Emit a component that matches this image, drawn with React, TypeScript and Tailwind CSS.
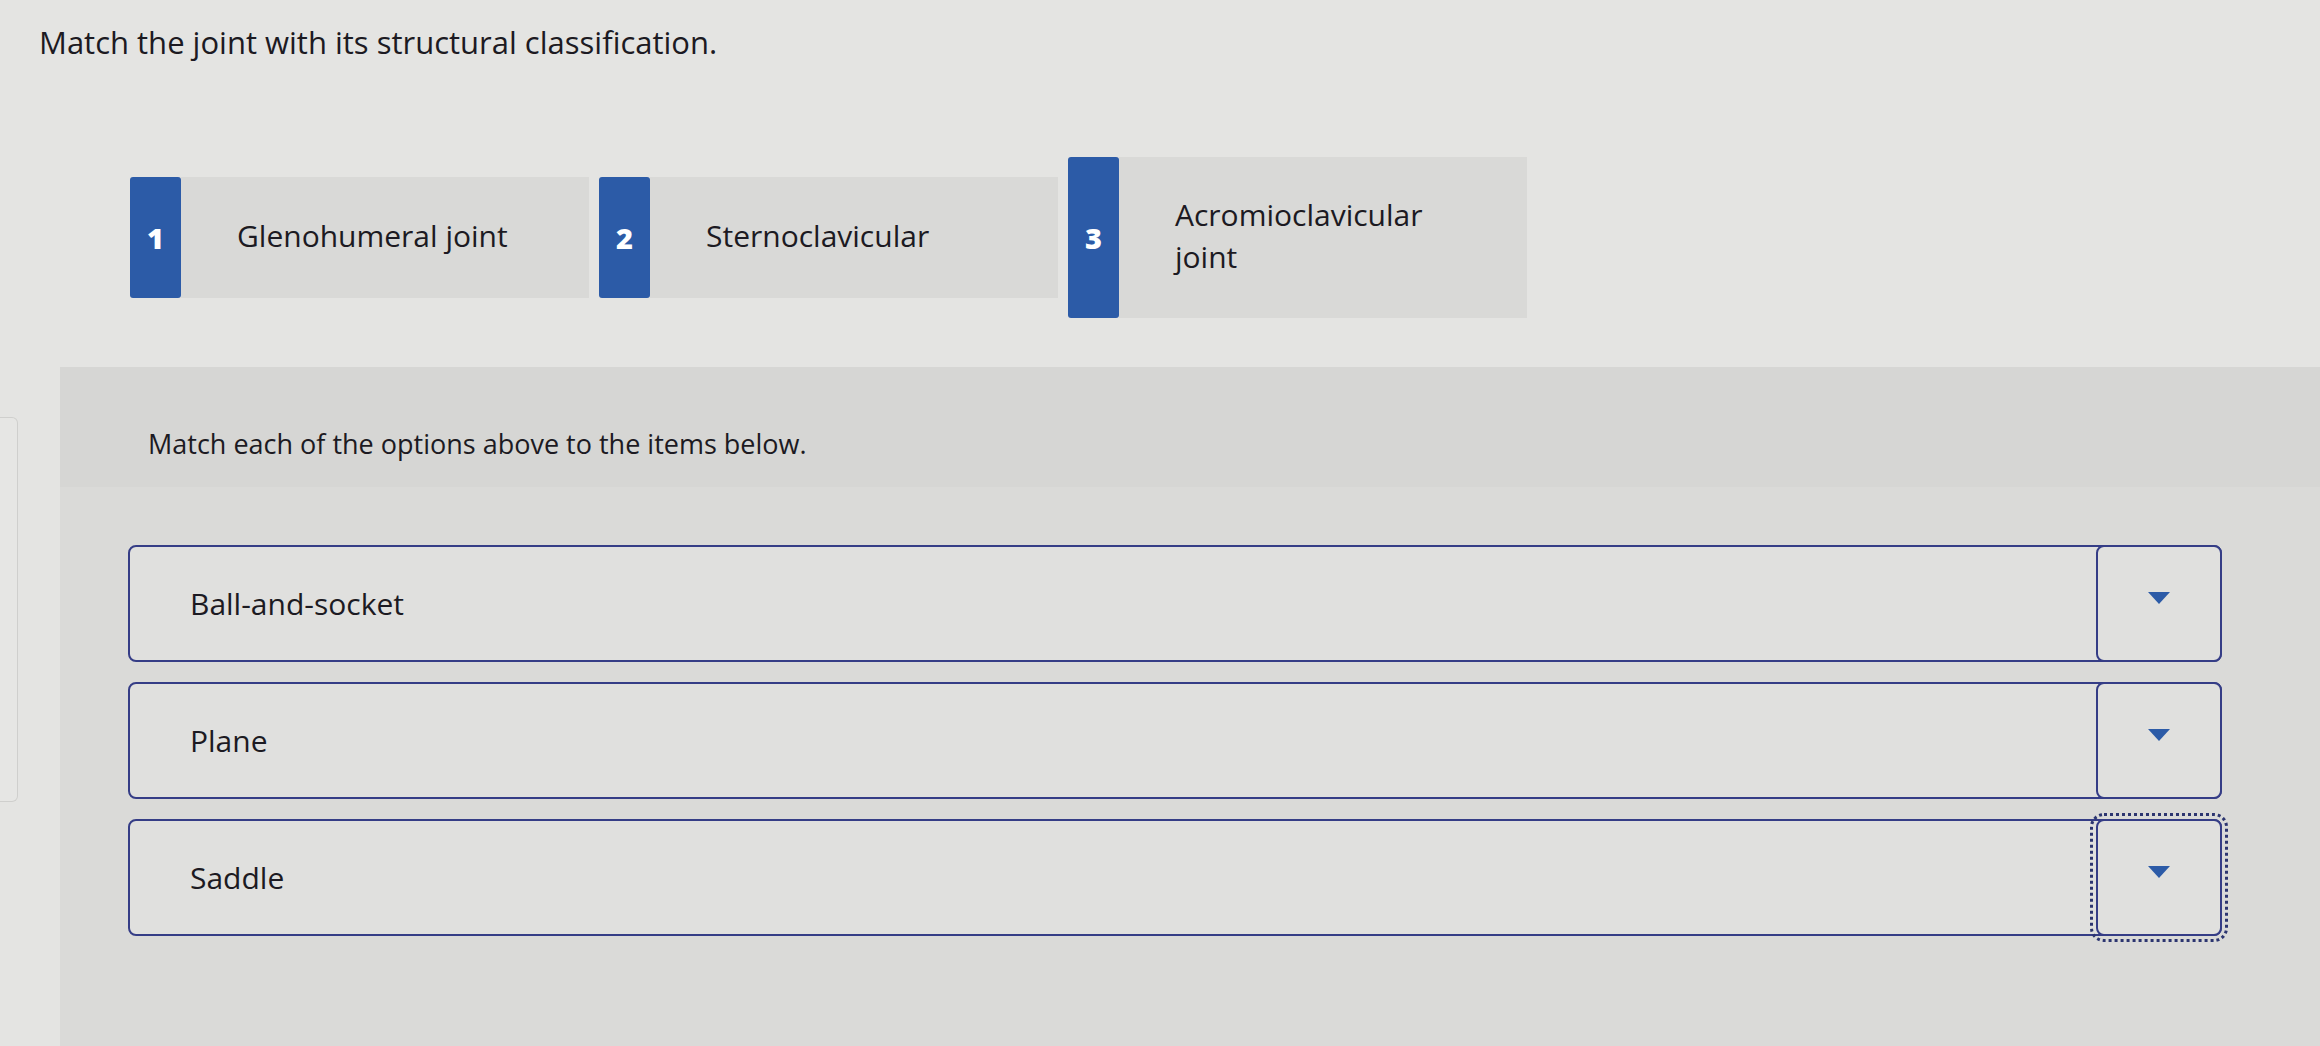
import React from 'react';

interface IOption {
  n: number;
  label: string;
}

const options: IOption[] = [
  { n: 1, label: 'Glenohumeral joint' },
  { n: 2, label: 'Sternoclavicular' },
  { n: 3, label: 'Acromioclavicular joint' },
];

const items = ['Ball-and-socket', 'Plane', 'Saddle'];

function OptionCard({ option }: { option: IOption }) {
  const tall = option.n === 3;
  return (
    <div className={`flex w-[459px] ${tall ? 'h-[161px]' : 'h-[121px]'}`}>
      <div className="flex w-[51px] shrink-0 items-center justify-center rounded-[3px] bg-[#2c5ba7] text-[29px] font-extrabold text-white">
        {option.n}
      </div>
      <div className="flex flex-1 items-center bg-[#d9d9d7] pb-[4px] pl-[56px] pr-[30px] text-[30px] leading-[42px] text-[#1c1a22]">
        <span className={tall ? 'w-[300px]' : ''}>{option.label}</span>
      </div>
    </div>
  );
}

function MatchRow({ label, focused }: { label: string; focused: boolean }) {
  return (
    <div className="flex h-[117px] rounded-lg border-2 border-[#353d86] bg-[#e0e0de]">
      <div className="flex flex-1 items-center pl-[60px] text-[30px] text-[#1c1a22]">{label}</div>
      <button
        className={`-my-[2px] -mr-[2px] flex w-[126px] items-center justify-center rounded-lg border-2 border-[#353d86] bg-[#e0e0de] ${
          focused ? 'outline-[3px] outline-offset-[3px] outline-dotted outline-[#2c3570]' : ''
        }`}
      >
        <svg width="24" height="14" viewBox="0 0 24 14" className="-mt-3">
          <path d="M1 1h22L12 13z" fill="#2c5ba7" />
        </svg>
      </button>
    </div>
  );
}

export default function App() {
  return (
    <div className="h-[1046px] w-[2320px] overflow-hidden bg-[#e4e4e2] font-['Open_Sans',sans-serif]">
      <h1 className="pl-[39px] pt-[21px] text-[31px] leading-[42px] text-[#1c1a22]">
        Match the joint with its structural classification.
      </h1>

      {/* options */}
      <div className="mt-[94px] flex items-center gap-[10px] pl-[130px]">
        {options.map(o => (
          <OptionCard key={o.n} option={o} />
        ))}
      </div>

      {/* matching panel */}
      <div className="mt-[49px] flex">
        <div className="mt-[50px] h-[385px] w-[18px] shrink-0 rounded-r-md border border-l-0 border-[#cfcfcd] bg-[#e6e6e4]" />
        <div className="ml-[42px] h-[680px] flex-1 bg-[#dadad8]">
          <div className="h-[120px] bg-[#d6d6d4] pl-[88px] pt-[59px] text-[27px] leading-[36px] text-[#1c1a22]">
            Match each of the options above to the items below.
          </div>
          <div className="flex flex-col gap-[20px] pl-[68px] pr-[98px] pt-[58px]">
            {items.map((it, i) => (
              <MatchRow key={it} label={it} focused={i === 2} />
            ))}
          </div>
        </div>
      </div>
    </div>
  );
}
